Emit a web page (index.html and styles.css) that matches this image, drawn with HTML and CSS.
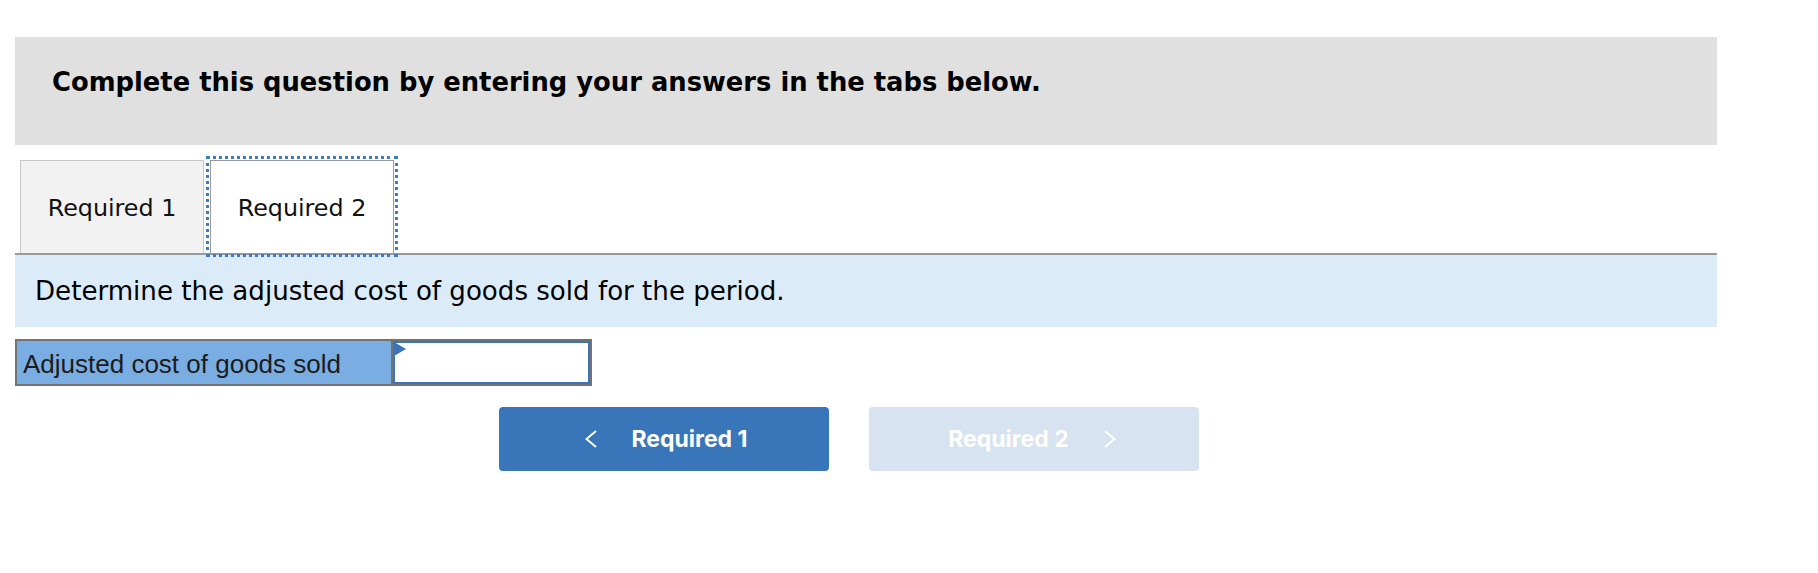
FILE: index.html
```html
<!DOCTYPE html>
<html lang="en">
<head>
<meta charset="utf-8">
<title>Required 2</title>
<link rel="stylesheet" href="styles.css">
</head>
<body>
<div class="page">
  <div class="instructions">Complete this question by entering your answers in the tabs below.</div>

  <div class="tabs">
    <div class="tab tab-inactive">Required 1</div>
    <div class="tab tab-active">Required 2</div>
  </div>

  <div class="prompt">Determine the adjusted cost of goods sold for the period.</div>

  <div class="answer-row">
    <div class="answer-label">Adjusted cost of goods sold</div>
    <div class="answer-input"></div>
  </div>

  <div class="nav">
    <button class="nav-btn nav-prev" type="button">
      <svg class="chev" width="12" height="18" viewBox="0 0 12 18"><polyline points="11,1 1.5,9 11,17" fill="none" stroke="#fff" stroke-width="2"/></svg>
      <span>Required 1</span>
    </button>
    <button class="nav-btn nav-next" type="button">
      <span>Required 2</span>
      <svg class="chev" width="12" height="18" viewBox="0 0 12 18"><polyline points="1,1 10.5,9 1,17" fill="none" stroke="#fff" stroke-width="2"/></svg>
    </button>
  </div>
</div>
</body>
</html>
```
FILE: styles.css
```css
* { box-sizing: border-box; }

html, body {
  margin: 0;
  padding: 0;
  background: #fff;
}

.page {
  width: 1702px;
  margin: 37px 0 0 15px;
  font-family: "DejaVu Sans", Verdana, sans-serif;
  color: #000;
}

.instructions {
  background: #e0e0e0;
  height: 108px;
  padding: 29px 0 0 37px;
  font-weight: bold;
  font-size: 25.8px;
  line-height: 32px;
}

.tabs {
  display: flex;
  gap: 6px;
  margin-top: 15px;
  padding-left: 5px;
  border-bottom: 2px solid #999;
}

.tab {
  width: 184px;
  height: 93px;
  display: flex;
  align-items: center;
  justify-content: center;
  font-size: 23.8px;
  color: #111;
  padding-top: 2px;
}

.tab-inactive {
  background: #f2f2f2;
  border: 1px solid #c8c8c8;
  border-bottom: none;
}

.tab-active {
  background: #fff;
  border: 1px solid #999;
  border-bottom: none;
  outline: 3px dotted #3b7bc8;
  outline-offset: 1px;
}

.prompt {
  background: #dbebf8;
  height: 72px;
  display: flex;
  align-items: center;
  padding-left: 20px;
  font-size: 26.1px;
}

.answer-row {
  display: flex;
  width: 577px;
  margin-top: 12px;
  border: 2px solid #737373;
}

.answer-label {
  width: 376px;
  height: 43px;
  background: #7aade2;
  border-right: 2px solid #737373;
  padding: 3px 0 0 6px;
  display: flex;
  align-items: center;
  font-family: "Liberation Sans", Arial, sans-serif;
  font-size: 26px;
  color: #1c1c1c;
}

.answer-input {
  position: relative;
  flex: 1;
  height: 43px;
  background: #fff;
  border: 2px solid #3b74b8;
}

.answer-input::before {
  content: "";
  position: absolute;
  left: -1px;
  top: -1px;
  border-left: 12px solid #3b74b8;
  border-top: 7px solid transparent;
  border-bottom: 7px solid transparent;
}

.nav {
  display: flex;
  gap: 40px;
  margin-top: 21px;
  padding-left: 484px;
}

.nav-btn {
  width: 330px;
  height: 64px;
  border: none;
  border-radius: 4px;
  display: flex;
  align-items: center;
  justify-content: center;
  gap: 35px;
  font-family: Inter, Roboto, sans-serif;
  font-weight: 700;
  font-size: 23px;
  color: #fff;
  padding: 0;
}

.nav-prev { background: #3876b9; padding-left: 4px; }
.nav-next { background: #d7e3f0; padding-right: 4px; }

.chev { display: block; }
```
